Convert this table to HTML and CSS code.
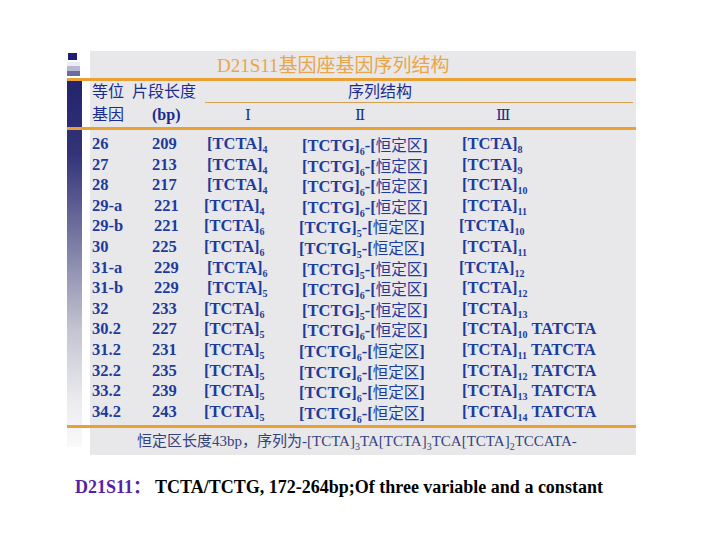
FILE: index.html
```html
<!DOCTYPE html>
<html lang="zh">
<head>
<meta charset="utf-8">
<title>D21S11基因座基因序列结构</title>
<link rel="stylesheet" href="styles.css">
</head>
<body>
<div class="slide">
  <div class="frame">
    <div class="title-row">
      <div class="marks">
        <span class="m m1"></span>
        <span class="m m2"></span>
        <span class="m m3"></span>
        <span class="m m4"></span>
      </div>
      <h1 class="title">D21S11基因座基因序列结构</h1>
    </div>
    <div class="head">
      <div class="head-1">
        <span class="h-left"><span>等位</span><span class="h-len">片段长度</span></span>
        <span class="h-seq">序列结构</span>
      </div>
      <div class="head-2 grid">
        <span>基因</span>
        <span class="bp">(bp)</span>
        <span class="roman r1">Ⅰ</span>
        <span class="roman r2">Ⅱ</span>
        <span class="roman r3">Ⅲ</span>
      </div>
    </div>
    <div class="rows">
      <div class="grid row"><span>26</span><span>209</span><span>[TCTA]<sub>4</sub></span><span>[TCTG]<sub>6</sub>-[<i>恒定区</i>]</span><span>[TCTA]<sub>8</sub></span></div>
      <div class="grid row"><span>27</span><span>213</span><span>[TCTA]<sub>4</sub></span><span>[TCTG]<sub>6</sub>-[<i>恒定区</i>]</span><span>[TCTA]<sub>9</sub></span></div>
      <div class="grid row"><span>28</span><span>217</span><span>[TCTA]<sub>4</sub></span><span>[TCTG]<sub>6</sub>-[<i>恒定区</i>]</span><span>[TCTA]<sub>10</sub></span></div>
      <div class="grid row"><span>29-a</span><span class="ind">221</span><span class="shl">[TCTA]<sub>4</sub></span><span>[TCTG]<sub>6</sub>-[<i>恒定区</i>]</span><span>[TCTA]<sub>11</sub></span></div>
      <div class="grid row"><span>29-b</span><span class="ind">221</span><span class="shl">[TCTA]<sub>6</sub></span><span class="shl">[TCTG]<sub>5</sub>-[<i>恒定区</i>]</span><span class="shl">[TCTA]<sub>10</sub></span></div>
      <div class="grid row"><span>30</span><span>225</span><span class="shl">[TCTA]<sub>6</sub></span><span class="shl">[TCTG]<sub>5</sub>-[<i>恒定区</i>]</span><span>[TCTA]<sub>11</sub></span></div>
      <div class="grid row"><span>31-a</span><span class="ind">229</span><span>[TCTA]<sub>6</sub></span><span>[TCTG]<sub>5</sub>-[<i>恒定区</i>]</span><span class="shl">[TCTA]<sub>12</sub></span></div>
      <div class="grid row"><span>31-b</span><span class="ind">229</span><span>[TCTA]<sub>5</sub></span><span>[TCTG]<sub>6</sub>-[<i>恒定区</i>]</span><span>[TCTA]<sub>12</sub></span></div>
      <div class="grid row"><span>32</span><span>233</span><span class="shl">[TCTA]<sub>6</sub></span><span>[TCTG]<sub>5</sub>-[<i>恒定区</i>]</span><span>[TCTA]<sub>13</sub></span></div>
      <div class="grid row"><span>30.2</span><span>227</span><span class="shl">[TCTA]<sub>5</sub></span><span>[TCTG]<sub>6</sub>-[<i>恒定区</i>]</span><span>[TCTA]<sub>10</sub> TATCTA</span></div>
      <div class="grid row"><span>31.2</span><span>231</span><span class="shl">[TCTA]<sub>5</sub></span><span class="shl">[TCTG]<sub>6</sub>-[<i>恒定区</i>]</span><span>[TCTA]<sub>11</sub> TATCTA</span></div>
      <div class="grid row"><span>32.2</span><span>235</span><span class="shl">[TCTA]<sub>5</sub></span><span class="shl">[TCTG]<sub>6</sub>-[<i>恒定区</i>]</span><span>[TCTA]<sub>12</sub> TATCTA</span></div>
      <div class="grid row"><span>33.2</span><span>239</span><span class="shl">[TCTA]<sub>5</sub></span><span class="shl">[TCTG]<sub>6</sub>-[<i>恒定区</i>]</span><span>[TCTA]<sub>13</sub> TATCTA</span></div>
      <div class="grid row"><span>34.2</span><span>243</span><span class="shl">[TCTA]<sub>5</sub></span><span class="shl">[TCTG]<sub>6</sub>-[<i>恒定区</i>]</span><span>[TCTA]<sub>14</sub> TATCTA</span></div>
    </div>
    <div class="foot">恒定区长度43bp，序列为-[TCTA]<sub>3</sub>TA[TCTA]<sub>3</sub>TCA[TCTA]<sub>2</sub>TCCATA-</div>
  </div>
  <p class="caption"><span class="cap-key">D21S11：</span><span class="cap-text">TCTA/TCTG, 172-264bp;Of three variable and a constant</span></p>
</div>
</body>
</html>
```
FILE: styles.css
```css
html, body {
  margin: 0;
  padding: 0;
  background: #ffffff;
}

.slide {
  width: 720px;
  height: 540px;
  padding-top: 50px;
  box-sizing: border-box;
  overflow: hidden;
}

.frame {
  margin-left: 67px;
  width: 569px;
  background:
    linear-gradient(to bottom, #24246c 0%, #33337a 20%, #7e7ea6 45%, #c4c4d2 68%, #ececf0 88%, #fafafb 100%) no-repeat 0 31px / 15px 366px,
    linear-gradient(#e8e8ea, #e8e8ea) no-repeat 23px 1px / 546px calc(100% - 1px);
  color: #1d3b9d;
}

/* title row */
.title-row {
  height: 28px;
  border-bottom: 3px solid #eaa033;
  display: flex;
  align-items: flex-start;
}

.marks {
  width: 15px;
  padding-top: 3px;
  display: flex;
  flex-direction: column;
  align-items: flex-start;
}

.m { display: block; }
.m1 { width: 9px; height: 7px; background: #1e1e78; margin-left: 1px; }
.m2 { width: 13px; height: 4px; background: #ececf4; margin-top: 2px; }
.m3 { width: 13px; height: 5px; background: #b8b8d4; }
.m4 { width: 13px; height: 5px; background: #6c6ca0; }

.title {
  margin: 0 0 0 135px;
  font-family: "Liberation Serif", "Noto Sans CJK SC", serif;
  font-weight: 400;
  font-size: 19px;
  line-height: 28px;
  color: #e9a54a;
  padding-top: 2px;
}

/* header */
.head {
  border-bottom: 3px solid #eaa033;
  font-family: "Liberation Serif", "Noto Sans CJK SC", serif;
  font-size: 16px;
  color: #1a2c92;
}

.head-1 {
  display: flex;
  height: 22px;
  line-height: 22px;
  padding-left: 25px;
}

.h-left {
  width: 113px;
  white-space: nowrap;
}

.h-len { margin-left: 8px; }

.h-seq {
  flex: 1;
  margin-right: 3px;
  border-bottom: 1px solid #d9a050;
  padding-left: 143px;
  height: 21px;
}

.head-2 {
  height: 24px;
  line-height: 24px;
}

.bp { font-weight: 700; }
.roman { font-family: "DejaVu Serif", "Liberation Serif", serif; font-size: 15px; font-weight: 400; }
.r1 { padding-left: 38px; }
.r2 { padding-left: 53px; }
.r3 { padding-left: 34px; }

/* data grid */
.grid {
  display: grid;
  grid-template-columns: 60px 55px 95px 160px 1fr;
  padding-left: 25px;
  white-space: nowrap;
}

.rows {
  padding: 4px 0 3px;
  border-bottom: 3px solid #eaa033;
  font-family: "Liberation Serif", "Noto Sans CJK SC", serif;
  font-weight: 700;
  font-size: 16.5px;
}

.row {
  height: 20.6px;
  line-height: 20.6px;
}

.row sub, .foot sub {
  font-size: 10px;
  line-height: 0;
  vertical-align: -4px;
}

.row i {
  font-style: normal;
  font-weight: 400;
  font-family: "Noto Sans CJK SC", sans-serif;
  font-size: 15.5px;
}

.ind { padding-left: 2px; }
.shl { margin-left: -3px; }

/* footer */
.foot {
  height: 27px;
  line-height: 27px;
  padding-left: 70px;
  font-family: "Liberation Serif", "Noto Sans CJK SC", serif;
  font-size: 15px;
  color: #34427e;
  white-space: nowrap;
}

/* caption */
.caption {
  margin: 21px 0 0 75px;
  font-family: "Liberation Serif", "Noto Sans CJK SC", serif;
  font-weight: 700;
  font-size: 18px;
  line-height: 22px;
  white-space: nowrap;
}

.cap-key { color: #5a1fa6; margin-right: 4px; }
.cap-text { color: #000000; }
```
